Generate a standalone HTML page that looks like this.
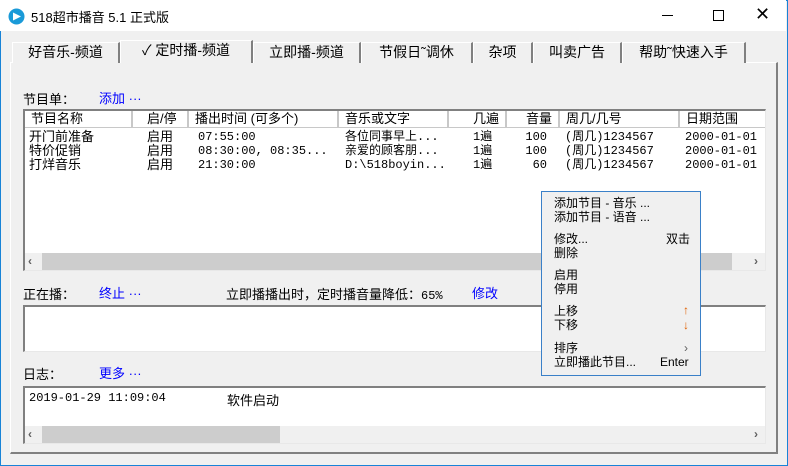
<!DOCTYPE html>
<html><head><meta charset="utf-8"><style>
*{margin:0;padding:0;box-sizing:border-box}
body{width:788px;height:466px;overflow:hidden;background:#f0f0f0;font-family:"Liberation Sans","Noto Sans CJK SC",sans-serif;font-size:12px;color:#000;position:relative}
.a{position:absolute;white-space:nowrap}
.win{position:absolute;left:0;top:0;width:788px;height:466px;border:1px solid #1883d7;}
.title{position:absolute;left:0;top:0;width:786px;height:31px;background:#fff}
.tab{position:absolute;top:42px;height:21px;border:1px solid #a0a0a0;border-bottom:none;border-right:2px solid #808080;background:#f0f0f0;font-size:14px;line-height:19px;text-align:center;border-left-color:#fff;border-top-color:#fff}
.panel{position:absolute;left:10px;top:62px;width:768px;height:392px;border-top:1px solid #fff;border-left:1px solid #fff;border-right:2px solid #808080;border-bottom:2px solid #808080}
.box{position:absolute;background:#fff;border-top:2px solid #808080;border-left:2px solid #808080;border-right:1px solid #e8e8e8;border-bottom:1px solid #e8e8e8}
.blue{color:#0000ff}
.hd{position:absolute;top:0;height:17px;border-right:2px solid #c8c8c8;border-bottom:1px solid #c8c8c8;line-height:16px;font-size:13px;padding-left:6px}
.mono{font-family:"Liberation Mono","Noto Sans CJK SC",monospace;font-size:12px}
.sb{position:absolute;background:#cdcdcd}
</style></head><body>
<div class="win"></div>
<div class="title"></div>
<svg class="a" style="left:8px;top:8px" width="17" height="17"><circle cx="8.5" cy="8.5" r="8" fill="#1a9ad8"/><path d="M5 4.5 L13 8.5 L5 12.5Z" fill="#fff"/></svg>
<div class="a" style="left:31px;top:7px;font-size:13px">518超市播音 5.1 正式版</div>
<div class="a" style="left:662px;top:15px;width:11px;height:1px;background:#000"></div>
<div class="a" style="left:713px;top:10px;width:11px;height:11px;border:1px solid #000"></div>
<div class="a" style="left:755px;top:4px;font-size:18px;font-weight:100">✕</div>

<div class="panel"></div>
<div class="tab" style="left:12px;width:108px">好音乐-频道</div>
<div class="tab" style="left:120px;top:40px;height:23px;width:133px;border-bottom:none">✓ 定时播-频道</div>
<div class="tab" style="left:253px;width:108px">立即播-频道</div>
<div class="tab" style="left:361px;width:112px">节假日˜调休</div>
<div class="tab" style="left:473px;width:60px">杂项</div>
<div class="tab" style="left:533px;width:89px">叫卖广告</div>
<div class="tab" style="left:622px;width:124px">帮助˜快速入手</div>

<div class="a" style="left:23px;top:89px;font-size:13px">节目单：</div>
<div class="a blue" style="left:99px;top:88px;font-size:13px">添加 ···</div>

<div class="box" style="left:23px;top:109px;width:743px;height:162px;overflow:hidden">
 <div class="hd" style="left:0;width:108px;padding-left:6px">节目名称</div>
 <div class="hd" style="left:108px;width:56px;padding-left:14px">启/停</div>
 <div class="hd" style="left:164px;width:150px">播出时间 (可多个)</div>
 <div class="hd" style="left:314px;width:110px">音乐或文字</div>
 <div class="hd" style="left:424px;width:58px;text-align:right;padding-right:6px">几遍</div>
 <div class="hd" style="left:482px;width:53px;text-align:right;padding-right:6px">音量</div>
 <div class="hd" style="left:535px;width:120px">周几/几号</div>
 <div class="hd" style="left:655px;width:100px;border-right:none">日期范围</div>
 <div class="a" style="left:4px;top:19px;line-height:14px;font-size:13px">开门前准备<br>特价促销<br>打烊音乐</div>
 <div class="a" style="left:122px;top:19px;line-height:14px;font-size:13px">启用<br>启用<br>启用</div>
 <div class="a mono" style="left:173px;top:19px;line-height:14px">07:55:00<br>08:30:00, 08:35...<br>21:30:00</div>
 <div class="a mono" style="left:320px;top:19px;line-height:14px">各位同事早上...<br>亲爱的顾客朋...<br>D:\518boyin...</div>
 <div class="a mono" style="left:448px;top:19px;line-height:14px">1遍<br>1遍<br>1遍</div>
 <div class="a mono" style="left:500px;top:19px;line-height:14px;text-align:right;width:22px">100<br>100<br>60</div>
 <div class="a mono" style="left:540px;top:19px;line-height:14px">(周几)1234567<br>(周几)1234567<br>(周几)1234567</div>
 <div class="a mono" style="left:660px;top:19px;line-height:14px">2000-01-01<br>2000-01-01<br>2000-01-01</div>
 <div class="a" style="left:0;top:142px;width:741px;height:17px;background:#f0f0f0"></div>
 <div class="sb" style="left:17px;top:142px;width:690px;height:17px"></div>
 <div class="a" style="left:3px;top:143px;font-size:12px;font-weight:bold;color:#606060">‹</div>
 <div class="a" style="left:729px;top:143px;font-size:12px;font-weight:bold;color:#606060">›</div>
</div>

<div class="a" style="left:23px;top:284px;font-size:13px">正在播：</div>
<div class="a blue" style="left:99px;top:283px;font-size:13px">终止 ···</div>
<div class="a" style="left:226px;top:284px;font-size:13px">立即播播出时，定时播音量降低：<span class="mono">65%</span></div>
<div class="a blue" style="left:472px;top:283px;font-size:13px">修改</div>
<div class="box" style="left:23px;top:305px;width:743px;height:47px"></div>

<div class="a" style="left:23px;top:364px;font-size:13px">日志：</div>
<div class="a blue" style="left:99px;top:363px;font-size:13px">更多 ···</div>
<div class="box" style="left:23px;top:386px;width:743px;height:58px;overflow:hidden">
 <div class="a mono" style="left:4px;top:3px">2019-01-29 11:09:04</div>
 <div class="a" style="left:202px;top:2px;font-size:13px">软件启动</div>
 <div class="a" style="left:0;top:38px;width:741px;height:17px;background:#f0f0f0"></div>
 <div class="sb" style="left:17px;top:38px;width:238px;height:17px"></div>
 <div class="a" style="left:3px;top:39px;font-size:12px;font-weight:bold;color:#606060">‹</div>
 <div class="a" style="left:729px;top:39px;font-size:12px;font-weight:bold;color:#606060">›</div>
</div>

<div class="a" style="left:541px;top:191px;width:160px;height:185px;background:#f0f0f0;border:1px solid #3a80c8;font-size:12px;line-height:14px">
 <div class="a" style="left:12px;top:4px">添加节目 - 音乐 ...<br>添加节目 - 语音 ...</div>
 <div class="a" style="left:12px;top:40px">修改...<br>删除</div>
 <div class="a" style="left:124px;top:40px">双击</div>
 <div class="a" style="left:12px;top:76px">启用<br>停用</div>
 <div class="a" style="left:12px;top:112px">上移<br>下移</div>
 <div class="a" style="left:141px;top:111px;color:#e06000;font-weight:bold;line-height:15px">↑<br>↓</div>
 <div class="a" style="left:12px;top:149px">排序<br>立即播此节目...</div>
 <div class="a" style="left:142px;top:149px;color:#606060">›</div>
 <div class="a" style="left:118px;top:163px">Enter</div>
</div>
</body></html>
